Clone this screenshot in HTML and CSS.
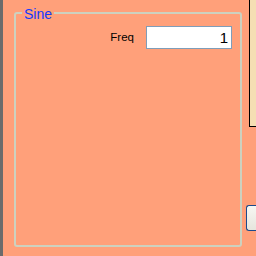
FILE: index.html
```html
<!DOCTYPE html>
<html>
<head>
<meta charset="utf-8">
<link rel="stylesheet" href="styles.css">
</head>
<body>
<div class="edge"></div>
<div class="main">
  <div class="group">
    <span class="legend">Sine</span>
    <div class="row">
      <span class="label">Freq</span>
      <div class="textbox">1</div>
    </div>
  </div>
</div>
<div class="side">
  <div class="panel"></div>
  <div class="button"></div>
</div>
</body>
</html>
```
FILE: styles.css
```css
html, body {
  margin: 0;
  padding: 0;
}
body {
  width: 256px;
  height: 256px;
  overflow: hidden;
  display: flex;
  background: #ffa07a;
  font-family: "Liberation Sans", Arial, sans-serif;
}
.edge {
  width: 3px;
  flex: none;
  background: #6b6b6b;
}
.main {
  flex: none;
  width: 243px;
  padding: 12px 0 0 11px;
  box-sizing: border-box;
}
.group {
  position: relative;
  width: 228px;
  height: 235px;
  box-sizing: border-box;
  border: 2px solid #cdd1bf;
  border-radius: 3px;
}
.legend {
  position: absolute;
  left: 6px;
  top: -8px;
  padding: 0 2px;
  background: #ffa07a;
  color: #1438ff;
  font-size: 14px;
  line-height: 16px;
}
.row {
  display: flex;
  justify-content: flex-end;
  align-items: center;
  gap: 12px;
  padding: 12px 8px 0 0;
}
.label {
  font-size: 11.5px;
  line-height: 13px;
  color: #000;
}
.textbox {
  width: 86px;
  height: 23px;
  box-sizing: border-box;
  border: 1px solid #7f9db9;
  background: #fff;
  text-align: right;
  padding-right: 3px;
  font-size: 15px;
  line-height: 21px;
  color: #000;
}
.side {
  flex: 1;
  min-width: 0;
  overflow: hidden;
  display: flex;
  flex-direction: column;
}
.panel {
  margin-left: 3px;
  height: 127px;
  box-sizing: border-box;
  background: #f5deb3;
  border-left: 1px solid #000;
  border-bottom: 1px solid #000;
}
.button {
  margin-top: 78px;
  height: 26px;
  box-sizing: border-box;
  border: 1px solid #1c4a8c;
  border-right: none;
  border-radius: 3px 0 0 3px;
  background: linear-gradient(#f7f7f3, #e6e5dd);
}
```
